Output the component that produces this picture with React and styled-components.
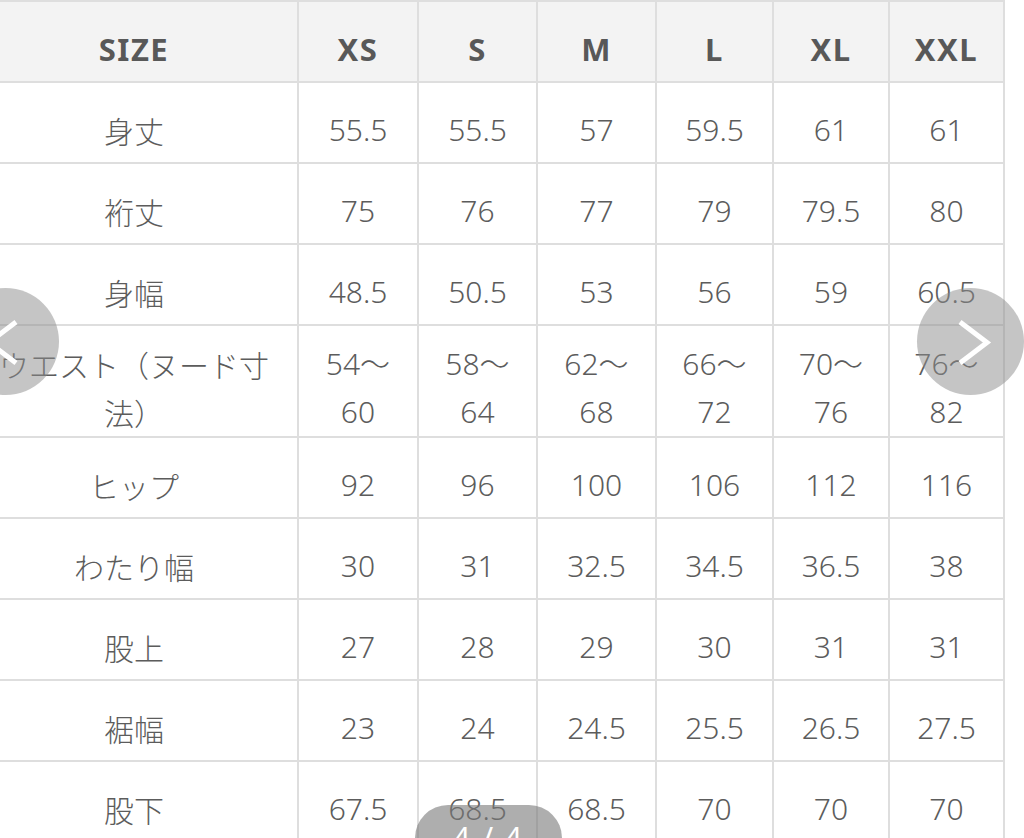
import React from 'react';
import styled, { createGlobalStyle } from 'styled-components';

const GlobalStyle = createGlobalStyle`
  html, body {
    margin: 0;
    padding: 0;
    background: #ffffff;
  }
  body {
    font-family: "Noto Sans", "Noto Sans CJK JP", sans-serif;
  }
`;

const Page = styled.div`
  position: relative;
  width: 1024px;
  height: 838px;
  overflow: hidden;
  background: #ffffff;
`;

const SizeTable = styled.table`
  margin-left: -31px;
  width: 1034px;
  table-layout: fixed;
  border-collapse: collapse;
  border: 2px solid #dedede;
  color: #5c5c5c;
`;

const HeadRow = styled.tr`
  height: 81px;
  background: #f3f3f3;
`;

const Row = styled.tr`
  height: ${(p) => (p.$tall ? 110 : 81)}px;
`;

const HeadCell = styled.th`
  border: 2px solid #dedede;
  padding: 14px 0 0;
  font-size: 31px;
  font-weight: 700;
  letter-spacing: 1.5px;
  line-height: 48px;
  color: #585858;
  text-align: center;
  vertical-align: middle;
`;

const Cell = styled.td`
  border: 2px solid #dedede;
  padding: 14px 0 0;
  font-size: 30px;
  font-weight: 300;
  line-height: 48px;
  text-align: center;
  vertical-align: middle;
  white-space: pre-line;
  font-family: ${(p) =>
    p.$label
      ? '"Noto Sans CJK JP", "Noto Sans", sans-serif'
      : '"Noto Sans", "Noto Sans CJK JP", sans-serif'};
`;

const NavButton = styled.div`
  position: absolute;
  top: 288px;
  ${(p) => (p.$side === 'left' ? 'left: -48px;' : 'left: 917px;')}
  width: 107px;
  height: 107px;
  border-radius: 50%;
  background: rgba(140, 140, 140, 0.5);
`;

const Counter = styled.div`
  position: absolute;
  left: 415px;
  top: 805px;
  width: 147px;
  height: 66px;
  border-radius: 33px;
  background: rgba(120, 120, 120, 0.6);
  color: #ffffff;
  font-size: 30px;
  line-height: 66px;
  text-align: center;
  letter-spacing: 2px;
`;

const columns = [328, 120, 119, 119, 117, 116, 115];
const sizes = ['XS', 'S', 'M', 'L', 'XL', 'XXL'];

const rows = [
  { label: '身丈', values: ['55.5', '55.5', '57', '59.5', '61', '61'] },
  { label: '裄丈', values: ['75', '76', '77', '79', '79.5', '80'] },
  { label: '身幅', values: ['48.5', '50.5', '53', '56', '59', '60.5'] },
  {
    label: 'ウエスト（ヌード寸\n法）',
    values: ['54～\n60', '58～\n64', '62～\n68', '66～\n72', '70～\n76', '76～\n82'],
    tall: true,
  },
  { label: 'ヒップ', values: ['92', '96', '100', '106', '112', '116'] },
  { label: 'わたり幅', values: ['30', '31', '32.5', '34.5', '36.5', '38'] },
  { label: '股上', values: ['27', '28', '29', '30', '31', '31'] },
  { label: '裾幅', values: ['23', '24', '24.5', '25.5', '26.5', '27.5'] },
  { label: '股下', values: ['67.5', '68.5', '68.5', '70', '70', '70'] },
];

function Chevron({ side }) {
  const points = side === 'left' ? '64,34 37,54.5 64,75' : '43,34 70,54.5 43,75';
  return (
    <svg width="107" height="107" viewBox="0 0 107 107">
      <polyline points={points} fill="none" stroke="#ffffff" strokeWidth="5" />
    </svg>
  );
}

export default function App() {
  return (
    <Page>
      <GlobalStyle />
      <SizeTable>
        <colgroup>
          {columns.map((w, i) => (
            <col key={i} style={{ width: w }} />
          ))}
        </colgroup>
        <thead>
          <HeadRow>
            <HeadCell>SIZE</HeadCell>
            {sizes.map((s) => (
              <HeadCell key={s}>{s}</HeadCell>
            ))}
          </HeadRow>
        </thead>
        <tbody>
          {rows.map((row) => (
            <Row key={row.label} $tall={row.tall}>
              <Cell $label>{row.label}</Cell>
              {row.values.map((v, i) => (
                <Cell key={i}>{v}</Cell>
              ))}
            </Row>
          ))}
        </tbody>
      </SizeTable>

      {/* carousel controls lying over the table */}
      <NavButton $side="left">
        <Chevron side="left" />
      </NavButton>
      <NavButton $side="right">
        <Chevron side="right" />
      </NavButton>
      <Counter>4 / 4</Counter>
    </Page>
  );
}
